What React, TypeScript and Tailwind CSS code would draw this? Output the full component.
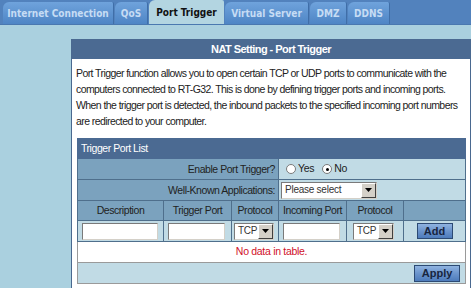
import React from "react";

const tabs = [
  { label: "Internet Connection", active: false, w: "w-[111px]" },
  { label: "QoS", active: false, w: "w-[33px]" },
  { label: "Port Trigger", active: true, w: "w-[75px]" },
  { label: "Virtual Server", active: false, w: "w-[84px]" },
  { label: "DMZ", active: false, w: "w-[37px]" },
  { label: "DDNS", active: false, w: "w-[42px]" },
];

const SANS = '"Liberation Sans", Arial, sans-serif';
const TABFONT = '"DejaVu Sans Condensed", "DejaVu Sans", Verdana, sans-serif';

function SelectBox({ text, width }: { text: string; width: string }) {
  return (
    <div
      className={`flex items-center h-[17px] bg-white border border-t-[#7a7a7a] border-l-[#7a7a7a] border-r-[#d4d0c8] border-b-[#d4d0c8] ${width}`}
    >
      <span className="flex-1 pl-[3px] text-[10px] tracking-[-0.25px] leading-none text-[#333] whitespace-nowrap overflow-hidden">
        {text}
      </span>
      <span className="w-[15px] h-[15px] shrink-0 bg-[#d4d0c8] border border-t-white border-l-white border-r-[#404040] border-b-[#404040] flex items-center justify-center">
        <svg width="7" height="4" viewBox="0 0 7 4">
          <path d="M0 0 H7 L3.5 4 Z" fill="#000" />
        </svg>
      </span>
    </div>
  );
}

function TextInput({ width }: { width: string }) {
  return (
    <div
      className={`h-[17px] bg-white border border-t-[#7a7a7a] border-l-[#7a7a7a] border-r-[#d4d0c8] border-b-[#d4d0c8] ${width}`}
    />
  );
}

function Btn({ label, width, height }: { label: string; width: string; height: string }) {
  return (
    <div
      className={`flex items-center justify-center bg-gradient-to-b from-[#8fb3e0] via-[#6b94cc] to-[#4d7bbb] border border-[#2c4a74] text-[11px] font-bold text-[#17253f] ${width} ${height}`}
    >
      {label}
    </div>
  );
}

function Radio({ checked }: { checked: boolean }) {
  return (
    <span className="w-[10px] h-[10px] shrink-0 rounded-full bg-white border border-[#7a7a7a] flex items-center justify-center">
      {checked && <span className="w-[3px] h-[3px] rounded-full bg-black" />}
    </span>
  );
}

export default function App() {
  const th =
    "bg-[#7ba2be] border border-[#4f6f8c] text-[10.5px] tracking-[-0.45px] text-[#222] font-normal leading-none";
  const cell = "border border-[#4f6f8c]";
  return (
    <div className="w-[471px] h-[288px] overflow-hidden bg-[#aad0df]" style={{ fontFamily: SANS }}>
      {/* Tab bar */}
      <div className="h-[25px] bg-[#5282bd] flex items-end gap-[1px] pl-[3px] border-b border-[#4a78b0]">
        {tabs.map((t) =>
          t.active ? (
            <div
              key={t.label}
              className={`${t.w} h-[24px] flex items-center justify-center rounded-tl-[6px] rounded-tr-[2px] bg-[#b3d5e1] text-[10px] font-bold text-[#111]`}
              style={{ fontFamily: TABFONT }}
            >
              {t.label}
            </div>
          ) : (
            <div
              key={t.label}
              className={`${t.w} h-[22px] flex items-center justify-center rounded-tl-[6px] rounded-tr-[2px] bg-gradient-to-b from-[#6fa3dc] to-[#4e85c5] border-r border-[#3f6ea8] text-[10px] font-bold text-[#c6dcf4]`}
              style={{ fontFamily: TABFONT }}
            >
              {t.label}
            </div>
          )
        )}
      </div>

      {/* Content */}
      <div className="pl-[71px] pt-[14px]">
        <div className="w-[400px] bg-white border-l border-r border-[#4a6990]">
          <div className="h-[20px] bg-[#4b6a92] flex items-center justify-center text-[11px] tracking-[-0.55px] font-bold text-white">
            NAT Setting - Port Trigger
          </div>
          <div className="px-[4px] pt-[6px] pb-[9px] text-[10.5px] tracking-[-0.58px] leading-[16px] text-[#222]">
            Port Trigger function allows you to open certain TCP or UDP ports to communicate with the computers connected to RT-G32. This is done by defining trigger ports and incoming ports. When the trigger port is detected, the inbound packets to the specified incoming port numbers are redirected to your computer.
          </div>
          <div className="px-[5px]">
            <table className="w-[388px] border-collapse border border-[#9a9a9a] table-fixed">
              <colgroup>
                <col className="w-[86px]" />
                <col className="w-[68px]" />
                <col className="w-[47px]" />
                <col className="w-[68px]" />
                <col className="w-[57px]" />
                <col className="w-[62px]" />
              </colgroup>
              <tbody>
                <tr className="h-[20px]">
                  <td
                    colSpan={6}
                    className="bg-[#4b6a92] text-white text-[10.5px] tracking-[-0.45px] pl-[3px] border border-[#4b6a92]"
                  >
                    Trigger Port List
                  </td>
                </tr>
                <tr className="h-[21px]">
                  <td colSpan={3} className={`${th} text-right pr-[3px]`}>
                    Enable Port Trigger?
                  </td>
                  <td colSpan={3} className={`bg-[#c1dbe5] ${cell} pl-[7px]`}>
                    <div className="flex items-center text-[10.5px] tracking-[-0.3px] text-[#222]">
                      <Radio checked={false} />
                      <span className="ml-[2px] mr-[8px]">Yes</span>
                      <Radio checked={true} />
                      <span className="ml-[2px]">No</span>
                    </div>
                  </td>
                </tr>
                <tr className="h-[21px]">
                  <td colSpan={3} className={`${th} text-right pr-[3px]`}>
                    Well-Known Applications:
                  </td>
                  <td colSpan={3} className={`bg-[#c1dbe5] ${cell} pl-[2px]`}>
                    <SelectBox text="Please select" width="w-[96px]" />
                  </td>
                </tr>
                <tr className="h-[20px] text-center">
                  <td className={th}>Description</td>
                  <td className={th}>Trigger Port</td>
                  <td className={th}>Protocol</td>
                  <td className={th}>Incoming Port</td>
                  <td className={th}>Protocol</td>
                  <td className={th}></td>
                </tr>
                <tr className="h-[21px] bg-[#c1dbe5]">
                  <td className={`${cell} pl-[4px]`}>
                    <TextInput width="w-[76px]" />
                  </td>
                  <td className={`${cell} pl-[4px]`}>
                    <TextInput width="w-[57px]" />
                  </td>
                  <td className={`${cell} pl-[2px]`}>
                    <SelectBox text="TCP" width="w-[40px]" />
                  </td>
                  <td className={`${cell} pl-[4px]`}>
                    <TextInput width="w-[57px]" />
                  </td>
                  <td className={`${cell} pl-[6px]`}>
                    <SelectBox text="TCP" width="w-[41px]" />
                  </td>
                  <td className={cell}>
                    <div className="flex justify-center">
                      <Btn label="Add" width="w-[36px]" height="h-[16px]" />
                    </div>
                  </td>
                </tr>
                <tr className="h-[21px] bg-white">
                  <td
                    colSpan={6}
                    className="text-center text-[10.5px] tracking-[-0.3px] text-[#d0102a] border border-[#9a9a9a]"
                  >
                    No data in table.
                  </td>
                </tr>
                <tr className="h-[21px] bg-[#c1dbe5]">
                  <td colSpan={6} className="border border-[#9a9a9a] pr-[5px]">
                    <div className="flex justify-end pt-[1px]">
                      <Btn label="Apply" width="w-[46px]" height="h-[17px]" />
                    </div>
                  </td>
                </tr>
              </tbody>
            </table>
          </div>
          <div className="h-[20px]" />
        </div>
      </div>
    </div>
  );
}
